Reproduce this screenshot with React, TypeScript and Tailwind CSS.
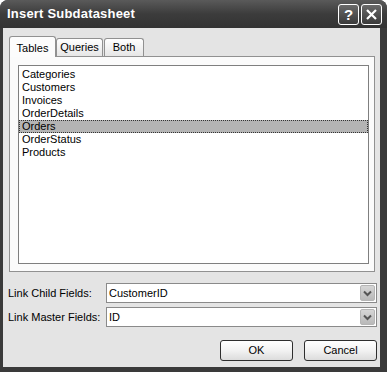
import React from "react";

const items = ["Categories", "Customers", "Invoices", "OrderDetails", "Orders", "OrderStatus", "Products"];

function Combo({ value }: { value: string }) {
  return (
    <div className="flex h-[20px] w-[271px] items-center border border-[#8a8a8a] bg-white">
      <span className="flex-1 pl-[2px] text-[11px] leading-none text-black">{value}</span>
      <div className="mr-[1px] flex h-[16px] w-[15px] items-center justify-center rounded-[2px] border border-[#b5b5b5] bg-gradient-to-b from-[#d6d6d6] to-[#b9b9b9]">
        <svg width="9" height="7" viewBox="0 0 9 7">
          <path d="M1 1.5 L4.5 5 L8 1.5" fill="none" stroke="#555" strokeWidth="2" />
        </svg>
      </div>
    </div>
  );
}

function Btn({ label }: { label: string }) {
  return (
    <div className="flex h-[21px] w-[73px] items-center justify-center rounded-[3px] border border-[#2e2e2e] bg-gradient-to-b from-[#ffffff] via-[#f2f2f2] to-[#dcdcdc] text-[11px] text-black">
      {label}
    </div>
  );
}

export default function App() {
  return (
    <div
      className="h-[372px] w-[387px] bg-white"
      style={{ fontFamily: '"Liberation Sans", Arial, sans-serif' }}
    >
      <div className="flex h-[372px] w-[387px] flex-col overflow-hidden rounded-t-[8px] bg-[#3a3a3a]">
        {/* Title bar */}
        <div className="flex h-[28px] shrink-0 items-center bg-gradient-to-b from-[#5a5a5a] via-[#3c3c3c] to-[#333333] pl-[7px] pr-[5px]">
          <span className="flex-1 text-[13px] font-bold tracking-[0.2px] text-white">Insert Subdatasheet</span>
          <div className="flex gap-[2px]">
            <div className="flex h-[21px] w-[21px] items-center justify-center rounded-[3px] border border-white bg-gradient-to-b from-[#6a6a6a] to-[#3a3a3a] text-[15px] font-bold leading-none text-white">
              ?
            </div>
            <div className="flex h-[21px] w-[21px] items-center justify-center rounded-[3px] border border-white bg-gradient-to-b from-[#6a6a6a] to-[#3a3a3a]">
              <svg width="13" height="13" viewBox="0 0 13 13">
                <path d="M2 2 L11 11 M11 2 L2 11" stroke="white" strokeWidth="2.2" />
              </svg>
            </div>
          </div>
        </div>
        {/* Body */}
        <div className="ml-[3px] mr-[7px] mb-[5px] flex flex-1 flex-col bg-[#e4e4e4]">
          {/* Tabs */}
          <div className="ml-[6px] mt-[8px] flex items-end">
            <div className="relative z-10 -mb-px flex h-[21px] w-[47px] items-start justify-center rounded-t-[3px] border border-b-0 border-[#919191] bg-[#fcfcfc] pt-[3px] text-[11px] text-black">
              Tables
            </div>
            <div className="flex h-[18px] w-[47px] items-center justify-center rounded-t-[3px] border border-b-0 border-[#919191] bg-gradient-to-b from-[#ffffff] to-[#e6e6e6] text-[11px] text-black">
              Queries
            </div>
            <div className="ml-[1px] flex h-[18px] w-[40px] items-center justify-center rounded-t-[3px] border border-b-0 border-[#919191] bg-gradient-to-b from-[#ffffff] to-[#e6e6e6] text-[11px] text-black">
              Both
            </div>
          </div>
          <div className="ml-[6px] h-[216px] w-[366px] border border-[#919191] bg-[#fbfbfb] pl-[8px] pt-[8px]">
            <div className="h-[199px] w-[351px] border border-[#7f7f7f] bg-white pt-[2px]">
              {items.map((it) => (
                <div
                  key={it}
                  className={
                    it === "Orders"
                      ? "flex h-[13px] items-center border border-dotted border-[#333] bg-[#b4b4b4] pl-[2px] text-[11px] leading-none text-black"
                      : "flex h-[13px] items-center pl-[3px] text-[11px] leading-none text-black"
                  }
                >
                  {it}
                </div>
              ))}
            </div>
          </div>
          {/* Link fields */}
          <div className="ml-[5px] mt-[11px] flex flex-col gap-[4px]">
            <div className="flex items-center">
              <span className="w-[98px] text-[11px] text-black">Link Child Fields:</span>
              <Combo value="CustomerID" />
            </div>
            <div className="flex items-center">
              <span className="w-[98px] text-[11px] text-black">Link Master Fields:</span>
              <Combo value="ID" />
            </div>
          </div>
          {/* Buttons */}
          <div className="mt-[13px] flex justify-end gap-[11px] pr-[3px]">
            <Btn label="OK" />
            <Btn label="Cancel" />
          </div>
        </div>
      </div>
    </div>
  );
}
